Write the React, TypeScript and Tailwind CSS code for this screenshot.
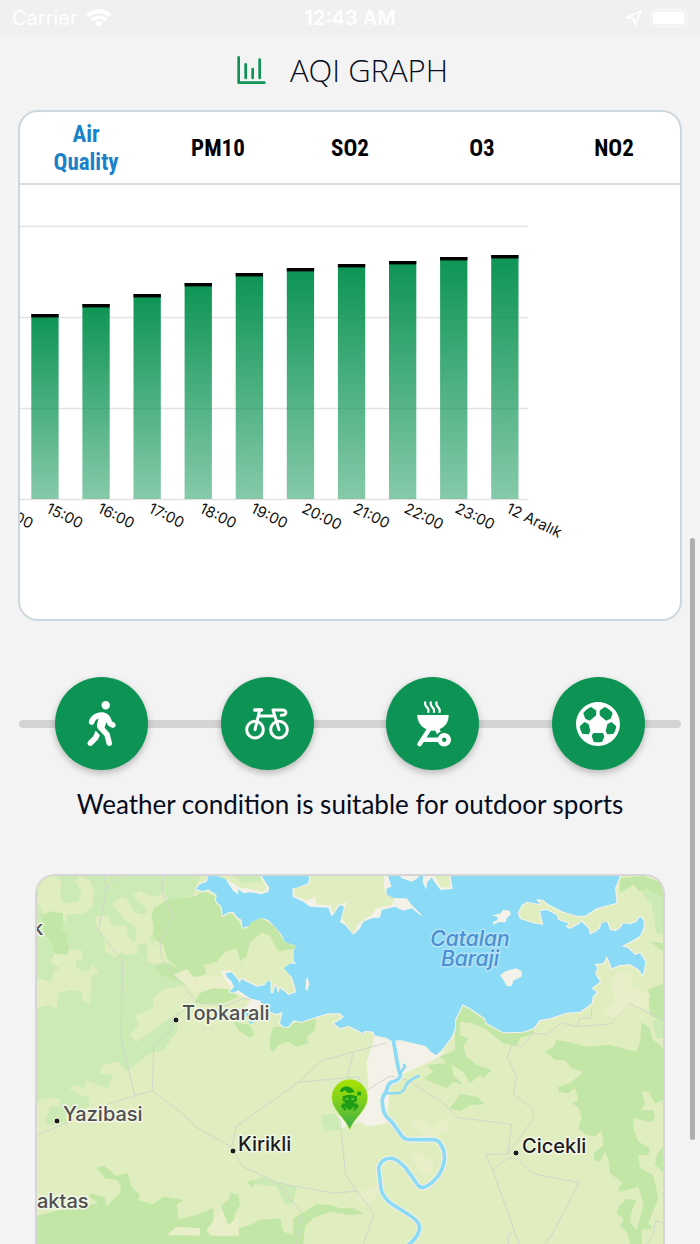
import React from "react";
import { FaPersonWalking } from "react-icons/fa6";
import { IoMdFootball } from "react-icons/io";
import { MdOutdoorGrill } from "react-icons/md";

const tabs = ["Air Quality", "PM10", "SO2", "O3", "NO2"];

const bars = [
  { label: "15:00", top: 314 },
  { label: "16:00", top: 304 },
  { label: "17:00", top: 294 },
  { label: "18:00", top: 283 },
  { label: "19:00", top: 273 },
  { label: "20:00", top: 268 },
  { label: "21:00", top: 264 },
  { label: "22:00", top: 261 },
  { label: "23:00", top: 257 },
  { label: "12 Aralık", top: 255 },
];

function StatusBar() {
  return (
    <header className="flex h-[34px] items-center bg-[#f0f0f0] px-3 pt-0.5 font-['Inter',sans-serif] text-xl leading-6 text-white">
      <div className="flex flex-1 items-center gap-2">
        <span>Carrier</span>
        <svg className="h-[18px] w-[26px]" viewBox="0 0 78 54" fill="none" aria-hidden="true">
          <path d="M5 21 A48 48 0 0 1 73 21" stroke="currentColor" strokeWidth="12" />
          <path d="M17 34 A31 31 0 0 1 61 34" stroke="currentColor" strokeWidth="11" />
          <path d="M26 42 A19 19 0 0 1 52 42 L39 54 Z" fill="currentColor" />
        </svg>
      </div>
      <time className="font-semibold">12:43 AM</time>
      <div className="flex flex-1 items-center justify-end gap-2">
        <svg className="h-4 w-4" viewBox="0 0 48 48" fill="none" aria-hidden="true">
          <path d="M45 4 L4 22 L23 26 L27 45 Z" stroke="currentColor" strokeWidth="5" strokeLinejoin="round" />
        </svg>
        <svg className="-mr-1 h-5 w-[42px]" viewBox="0 0 126 60" fill="none" aria-hidden="true">
          <rect x="3" y="4" width="108" height="52" rx="14" stroke="#f8f8f8" strokeWidth="4" />
          <rect x="9" y="11" width="94" height="38" rx="8" fill="currentColor" />
          <path d="M116 22 Q122 30 116 38 Z" fill="#f8f8f8" />
        </svg>
      </div>
    </header>
  );
}

function ChartIcon() {
  return (
    <svg className="h-[30px] w-[30px] text-[#0d9454]" viewBox="0 0 90 90" fill="none" stroke="currentColor" strokeWidth="8" strokeLinecap="round" strokeLinejoin="round" aria-hidden="true">
      <path d="M8 7 V83 H85 M29 28 V69 M50 42 V69 M71 14 V69" />
    </svg>
  );
}

function BicycleIcon() {
  return (
    <svg className="h-8 w-11" viewBox="0 0 132 96" fill="none" stroke="currentColor" strokeWidth="9" strokeLinecap="round" strokeLinejoin="round" aria-hidden="true">
      <circle cx="30" cy="65" r="25" />
      <circle cx="102" cy="65" r="25" />
      <path d="M29 6 H50" strokeWidth="10" />
      <path d="M44 6 L40 24 L30 65 M41 24 H89 M102 65 L84 6 H114 C127 8 125 23 109 22" />
    </svg>
  );
}

function AqiChart() {
  return (
    <svg className="block h-[434px] w-[660px] max-w-none" viewBox="20 185 660 434" role="img" aria-label="Air quality by hour">
      <defs>
        <linearGradient id="barFill" x1="0" y1="0" x2="0" y2="1">
          <stop offset="0" stopColor="#0d9454" />
          <stop offset="1" stopColor="#0d9454" stopOpacity="0.5" />
        </linearGradient>
      </defs>
      {[226, 317, 408, 499].map((y) => (
        <path key={y} d={`M19 ${y}.5H528`} stroke="#e3e3e3" strokeWidth="1.4" />
      ))}
      <g fontFamily="Inter, sans-serif" fontSize="15" fill="#111">
        <text transform="translate(-5 512) rotate(26)">14:00</text>
        {bars.map((bar, i) => {
          const x = 31.3 + i * 51.1;
          return (
            <g key={bar.label}>
              <rect x={x} y={bar.top} width="27.3" height={499 - bar.top} fill="url(#barFill)" />
              <rect x={x} y={bar.top} width="27.3" height="3.4" fill="#000" />
              <text transform={`translate(${x + 14} 512) rotate(26)`}>{bar.label}</text>
            </g>
          );
        })}
      </g>
    </svg>
  );
}

const lightForest = [
  "M51 33 H540 L520 90 L440 110 L400 230 L460 300 L500 360 L430 372 L400 400 V430 L345 450 L355 480 L330 510 L350 530 L420 480 L480 440 L470 500 L455 520 L430 555 L390 565 L350 595 L320 620 L295 590 L245 600 L240 625 L278 630 L265 670 L200 647 L195 670 L160 660 L150 675 L207 700 V725 L120 750 L120 700 L75 705 L51 720 Z",
  "M75 770 L90 725 L130 720 L140 770 L90 780 Z",
  "M905 750 L945 745 L960 770 L965 795 L915 797 L905 770 Z",
  "M680 955 L730 935 L770 950 L830 965 L820 1015 L795 1020 L770 965 L730 960 Z",
  "M1860 50 L1900 50 L1930 90 V210 L1910 205 L1895 120 L1870 90 Z",
  "M1895 470 L1930 450 V520 L1910 520 Z",
];

const meadows = [
  "M60 40 L100 33 L125 45 L120 80 L130 115 L175 110 L185 80 L165 50 L180 33 L210 45 L222 80 L218 125 L190 145 L140 150 L135 178 L125 145 L90 138 L75 155 L52 110 Z",
  "M275 118 L305 95 L325 105 L340 140 L375 150 L380 130 L355 110 L340 90 L360 78 L385 90 L410 95 L428 80 L445 100 L420 130 L395 150 L402 195 L388 220 L402 242 L435 250 L440 275 L465 297 L430 290 L400 300 L382 288 L380 235 L350 240 L355 265 L320 270 L300 260 L290 275 L255 262 L255 230 L230 185 L225 155 L265 150 L275 180 L320 185 L325 220 L345 235 L350 190 L320 170 Z",
  "M105 265 L142 270 L148 252 L185 255 L187 285 L170 285 L165 305 L190 320 L213 315 L215 295 L237 320 L215 335 L210 420 L188 405 L185 380 L150 375 L115 385 L110 432 L85 420 L51 430 V340 L95 350 L100 320 L120 310 L90 292 Z",
  "M51 718 L60 705 L75 700 L125 700 L105 720 L75 730 L70 760 L51 785 Z",
];

const forests = [
  "M440 105 L530 93 L547 78 L600 100 L668 187 L740 215 L745 300 L710 285 L690 215 L665 305 L650 250 L615 260 L590 290 L550 300 L560 325 L510 345 L475 310 L440 280 L430 240 L405 225 L395 150 L402 130 Z",
  "M65 150 L90 140 L130 145 L125 195 L145 215 L140 230 L147 250 L140 270 L105 265 L90 225 L75 210 Z",
  "M405 305 L430 295 L480 312 L500 335 L500 360 L450 340 L415 325 Z",
  "M525 410 L540 385 L580 368 L635 372 L655 395 L610 415 L540 418 Z",
  "M640 470 L690 480 L703 510 L690 518 L660 500 Z",
  "M750 520 L760 485 L800 485 L835 468 L860 470 L888 458 L885 495 L860 515 L865 535 L830 545 L805 530 L775 540 L760 562 L750 550 Z",
  "M51 1052 L120 1035 L235 1015 L205 992 L215 985 L255 998 L260 1022 L300 985 L303 970 L290 945 L255 940 L228 908 L252 902 L290 932 L322 923 L335 965 L360 990 L355 1005 L400 1018 L430 995 L490 1005 L470 1020 L475 1062 L530 1050 L580 1028 V1090 L600 1110 L655 1090 L690 1080 L720 1065 L780 1060 L790 1100 L820 1110 L820 1060 L890 1018 L930 1020 L960 1030 L1000 1028 L1030 1046 L990 1050 L930 1040 L880 1060 L855 1085 L850 1137 H51 Z",
  "M605 1020 L625 1005 L633 983 L655 990 L660 1020 L645 1045 L640 1070 L625 1080 L600 1050 Z",
  "M680 950 L705 945 L700 970 Z",
  "M1305 465 L1310 440 L1328 418 L1350 430 L1395 460 L1400 475 L1450 502 L1510 500 L1540 490 L1540 505 L1500 520 L1490 543 L1450 535 L1400 495 L1360 475 L1320 470 L1320 510 L1345 520 L1330 545 L1340 575 L1370 600 L1415 615 L1390 640 L1380 630 L1350 655 L1330 620 L1295 600 L1300 630 L1330 660 L1300 650 L1280 670 L1210 640 L1240 620 L1220 600 L1280 595 L1260 575 L1305 555 Z",
  "M1290 730 L1320 688 L1370 695 L1395 718 L1350 720 L1320 738 Z",
  "M1575 560 L1600 545 L1610 525 L1640 530 L1700 545 L1770 540 L1850 560 L1860 530 L1865 470 L1890 490 L1895 520 L1930 550 V705 L1905 715 L1885 680 L1865 678 L1875 715 L1865 735 L1900 735 L1905 755 L1895 772 L1840 760 V790 L1855 830 L1890 850 L1885 870 L1855 870 L1860 910 L1900 930 L1915 1000 L1885 1075 L1900 1090 L1865 1095 L1865 1137 H1830 L1820 1100 L1800 1085 L1810 1060 L1790 1045 L1800 1020 L1820 1002 L1850 1005 L1835 1040 L1830 1070 L1850 1095 L1860 1060 L1870 1020 L1855 965 L1800 980 L1795 965 L1810 955 L1770 925 L1765 885 L1755 860 L1740 890 L1725 885 L1720 865 L1750 840 L1745 795 L1725 815 L1700 810 L1675 790 L1685 760 L1675 725 L1655 715 L1675 705 L1665 668 L1645 685 L1615 680 L1615 665 L1650 655 L1690 620 L1655 610 L1635 585 L1605 585 Z",
  "M1800 40 L1870 33 L1930 55 V100 L1880 70 L1860 80 L1840 60 L1800 85 Z",
  "M1890 228 L1930 235 V260 L1915 250 Z",
  "M1885 375 L1930 355 V470 L1890 450 Z",
  "M1910 870 L1930 845 V920 L1905 900 Z",
];

const pale = [
  "M460 330 L500 312 L520 335 L560 335 L640 330 L650 375 L580 370 L530 385 Z",
  "M1170 780 L1190 760 L1240 790 L1260 770 L1290 760 L1280 800 L1220 820 Z",
  "M1165 860 L1200 865 L1240 890 L1235 930 L1200 920 Z",
  "M1005 1000 L1050 965 L1078 960 L1065 1000 L1035 1020 Z",
  "M1770 345 L1800 318 L1840 330 L1835 360 L1890 390 L1880 430 L1830 420 L1790 460 L1750 450 L1785 400 Z",
  "M440 1110 L470 1085 L540 1090 V1112 Z",
  "M560 1095 L605 1030 L625 1080 L655 1055 L657 1112 H570 Z",
];

const water =
  "M565 33 L560 50 L540 58 L527 71 L548 79 L565 73 L590 90 L588 108 L605 125 L608 152 L625 142 L640 140 L650 155 L665 165 L668 188 L690 182 L695 172 L725 158 L745 165 L765 185 L785 210 L795 232 L828 242 L820 260 L822 290 L830 296 L810 295 L790 310 L815 335 L825 365 L828 382 L805 390 L795 380 L780 370 L775 385 L766 360 L760 385 H752 L752 350 L742 345 L735 360 L710 365 L680 350 L663 342 L660 355 L650 340 L635 322 L617 325 L622 337 L635 350 L642 365 L630 380 L640 383 L655 376 L690 400 L722 408 L725 425 L750 440 L770 447 L788 440 L780 475 L790 485 H805 L820 466 L845 470 L900 452 L925 445 H960 L972 455 L960 465 L942 475 L960 490 L985 482 L1030 505 L1035 497 L1060 500 L1065 512 L1100 518 L1115 530 L1140 525 L1215 543 L1248 570 L1270 550 L1295 515 L1305 490 V465 L1328 418 L1350 430 L1395 460 L1400 475 L1450 502 L1510 500 L1540 490 L1560 465 L1590 460 L1640 443 L1680 440 L1715 415 L1718 395 L1730 382 L1715 370 L1740 350 L1725 325 L1732 310 L1723 297 L1750 295 L1760 273 L1770 295 L1775 310 L1800 300 L1830 298 L1855 312 L1868 330 L1872 315 L1876 290 L1860 265 L1845 270 L1825 250 L1805 243 L1830 230 L1860 213 L1872 185 L1870 165 L1860 155 L1850 170 L1830 178 L1810 175 L1800 190 L1788 198 L1770 195 L1762 172 L1745 170 L1740 190 L1725 202 L1710 208 L1705 190 L1685 170 L1675 178 L1650 192 L1638 185 L1645 175 L1615 165 L1610 150 L1580 135 L1560 138 L1570 180 L1540 175 L1500 162 L1493 145 L1505 120 L1520 110 L1545 115 L1560 118 L1548 102 L1570 105 L1585 118 L1630 140 L1670 152 L1695 152 L1730 130 L1790 113 L1785 70 L1800 33 Z";

const shores = [
  "M555 20 L615 40 L640 78 L655 88 L655 72 L670 85 L690 82 L725 88 L745 80 L748 68 L725 33 V20 Z",
  "M868 20 L865 55 L830 68 L817 70 L818 95 L850 110 L870 125 L925 128 L935 155 L960 120 L972 125 L960 172 L975 180 L1000 210 L1020 190 L1030 170 L1060 158 H1080 L1085 135 L1125 125 L1150 137 L1175 130 L1200 150 L1208 152 L1175 120 L1160 100 H1120 L1100 90 V70 L1115 65 L1100 20 Z",
  "M1130 20 L1145 40 L1175 50 L1195 38 V20 Z",
  "M1210 20 L1208 50 L1218 74 L1222 50 L1235 38 L1250 60 L1262 75 L1298 72 L1290 20 Z",
  "M858 345 L862 335 L868 358 L862 378 L856 372 Z",
];

const shoreMeadows = [
  "M555 20 L625 45 L660 68 L690 72 L730 82 L742 70 L720 33 V20 Z",
  "M872 20 L870 58 L820 72 L825 92 L860 108 L885 95 L890 118 L932 122 L940 145 L952 120 L980 112 L965 160 L1000 207 L1015 175 L1055 150 L1070 130 L1115 120 L1122 100 L1098 88 L1092 66 L1090 20 Z",
  "M1235 20 L1265 68 L1292 65 L1285 20 Z",
  "M1501 150 L1508 125 L1525 113 L1560 121 L1555 140 L1562 172 L1530 160 Z",
  "M1704 160 L1740 132 L1795 118 L1800 170 L1765 168 L1720 182 Z",
];

const roads =
  "M252 33 L260 70 L235 195 L308 292 L303 520 L345 692 L265 717 L51 812 M260 70 L305 35 M345 692 L397 677 L401 543 L450 500 L462 455 L530 412 L425 283 L420 230 L460 150 L427 85 V33 M530 412 L620 422 L670 400 L722 408 M397 677 L480 740 L530 787 L635 847 L650 783 L690 755 L835 652 L905 587 L1100 533 M835 652 L1015 635 L1035 680 L1110 633 L1160 645 L1265 710 L1315 758 L1475 778 L1463 868 H1397 L1418 915 L1497 1137 M1000 563 L982 635 M960 760 L977 930 M635 847 L668 905 L770 953 L845 1043 L830 1137 M770 953 L940 985 L1010 978 L977 930 M1010 978 L1062 1045 L1030 1137 M1470 555 L1462 577 L1490 635 L1480 688 L1540 733 V762 L1463 868 M1418 915 L1463 880 L1492 880 L1535 925 L1678 953 L1595 1110 L1575 1137 M1470 555 L1475 538 L1507 545 L1540 505 L1580 508 L1625 474 L1670 485 L1772 477 L1828 415 L1930 465 M1670 485 L1680 460 H1715 V433 M1465 1137 V1110 L1482 1100 M1880 1137 L1900 1110 L1907 1068 L1930 1075";

const river =
  "M1120 525 L1133 600 Q1137 622 1142 630 Q1136 648 1115 651 Q1104 656 1100 676 Q1090 692 1087 702 Q1086 738 1100 756 L1115 770 L1145 812 Q1152 824 1170 824 H1235 Q1256 824 1262 838 Q1276 858 1273 885 Q1268 918 1250 938 Q1228 964 1208 968 Q1195 966 1188 952 L1158 910 Q1130 880 1115 880 Q1100 878 1088 888 Q1075 900 1076 915 L1084 978 Q1098 1008 1120 1020 L1165 1048 Q1198 1070 1199 1085 Q1198 1115 1165 1140";

function MapLabel({ x, y, fill, halo, children }: { x: number; y: number; fill: string; halo: string; children: string }) {
  return (
    <text x={x} y={y} fill={fill} stroke={halo} strokeWidth="3" strokeLinejoin="round" paintOrder="stroke">
      {children}
    </text>
  );
}

function LocationMap() {
  return (
    <svg className="block h-auto w-full" viewBox="37 876 626 368" role="img" aria-label="Map around Kirikli">
      <defs>
        <linearGradient id="pin" x1="0" y1="0" x2="0" y2="1">
          <stop offset="0" stopColor="#a9e300" />
          <stop offset="0.5" stopColor="#77cb22" />
          <stop offset="1" stopColor="#39ae4e" />
        </linearGradient>
      </defs>
      <g transform="translate(20 865) scale(0.33333)">
        <rect x="40" y="20" width="1900" height="1130" fill="#e0eebf" />
        {lightForest.map((d) => <path key={d} d={d} fill="#cceab3" />)}
        {meadows.map((d) => <path key={d} d={d} fill="#e0eebf" />)}
        {forests.map((d) => <path key={d} d={d} fill="#c1e6a6" />)}
        {pale.map((d) => <path key={d} d={d} fill="#e8efc8" />)}
        <path d="M1065 512 L1115 525 L1215 543 L1248 570 L1280 558 L1240 585 L1155 625 L1110 660 L1100 775 L1040 785 L1020 770 L960 790 L955 755 L1000 740 L1045 670 L1040 590 Z" fill="#f4f1e8" />
        <path d="M600 318 L630 315 L660 355 L722 400 L715 435 L700 470 L670 440 L690 405 L640 380 Z" fill="#f4f1e8" />
        <path d={roads} fill="none" stroke="#cfd6cb" strokeWidth="3" />
        <path d={water} fill="#8bdbf6" stroke="#f4f1e8" strokeWidth="7" strokeLinejoin="round" paintOrder="stroke" />
        <path d="M690 478 L705 470 L690 440 L675 440 Z" fill="#8bdbf6" />
        {shores.map((d) => <path key={d} d={d} fill="#f4f1e8" />)}
        {shoreMeadows.map((d) => <path key={d} d={d} fill="#e0eebf" />)}
        <path d="M590 20 L650 38 L665 55 L725 50 L720 33 V20 Z" fill="#cceab3" />
        <path d="M660 350 L660 215 L695 172 L725 158 L765 185 L795 232 L828 242 L820 255 L775 260 L750 212 L725 203 L690 230 L680 275 L660 285 Z" fill="#c1e6a6" />
        <path d="M665 335 L662 285 L682 275 L692 232 L725 203 L748 212 L773 260 L818 252 L818 292 L790 308 L812 335 L820 365 L800 372 L778 362 L760 345 L735 352 L710 355 Z" fill="#e0eebf" />
        <path d="M1416 150 L1440 146 L1450 134 L1470 137 L1472 148 L1460 160 L1458 172 L1435 172 L1420 179 L1418 172 L1432 165 L1434 157 Z" fill="#f4f1e8" />
        <path d="M1440 331 L1458 318 L1490 310 L1506 320 L1505 335 L1480 347 L1475 364 L1460 363 L1450 345 Z" fill="#f4f1e8" />
        <path d="M1225 555 H1265 L1248 570 Z" fill="#8bdbf6" />
        <path d={river} fill="none" stroke="#f4f1e8" strokeWidth="17" strokeLinejoin="round" />
        <path d={river} fill="none" stroke="#8bdbf6" strokeWidth="11" strokeLinejoin="round" />
        <path d="M1140 625 L1155 605 L1150 597 M1095 685 L1135 684 Q1152 682 1158 660 Q1168 644 1198 632" fill="none" stroke="#8bdbf6" strokeWidth="8" />
        <path d="M989 793 C975 758 936 735 936 697 A53 53 0 0 1 1042 697 C1042 735 1003 758 989 793 Z" fill="url(#pin)" stroke="#96e31c" strokeWidth="2" />
        <g fill="#1e9e16">
          <path d="M960 680 C962 660 995 658 1004 682 L985 685 L975 676 L966 682 Z" />
          <rect x="1012" y="680" width="11" height="11" />
          <path d="M968 694 Q989 684 1011 694 V708 L1003 712 Q1004 728 989 736 Q974 728 975 712 L968 708 Z" />
          <circle cx="972" cy="722" r="7" />
          <circle cx="1007" cy="722" r="7" />
          <path d="M964 722 L978 736 M1015 722 L1001 736" stroke="#1e9e16" strokeWidth="6" />
        </g>
        <path d="M976 698 H985 V705 H976 Z M994 698 H1003 V705 H994 Z" fill="#63c31a" />
      </g>
      <g fill="#1b1b1b" stroke="#edf4dd">
        <circle cx="176" cy="1020" r="3" />
        <circle cx="57" cy="1121" r="3" />
        <circle cx="233" cy="1151" r="3" />
        <circle cx="516" cy="1153" r="3" />
      </g>
      <g fontFamily="Inter, sans-serif" fontSize="20" fontWeight="500">
        <MapLabel x={182} y={1020} fill="#505050" halo="#f3f7e8">Topkarali</MapLabel>
        <MapLabel x={63} y={1121} fill="#505050" halo="#f3f7e8">Yazibasi</MapLabel>
        <MapLabel x={37} y={1208} fill="#505050" halo="#f3f7e8">aktas</MapLabel>
        <MapLabel x={32} y={935} fill="#505050" halo="#f3f7e8">k</MapLabel>
        <MapLabel x={238} y={1151} fill="#1b1b1b" halo="#f3f7e8">Kirikli</MapLabel>
        <MapLabel x={522} y={1153} fill="#1b1b1b" halo="#f3f7e8">Cicekli</MapLabel>
      </g>
      <g fontFamily="Inter, sans-serif" fontSize="21" fontWeight="500" fontStyle="italic" textAnchor="middle">
        <MapLabel x={470} y={946} fill="#4a90d2" halo="#b4e3f6">Catalan</MapLabel>
        <MapLabel x={470} y={966} fill="#4a90d2" halo="#b4e3f6">Baraji</MapLabel>
      </g>
    </svg>
  );
}

const activities = [
  { name: "Walking", icon: <FaPersonWalking className="h-[45px] w-[45px]" /> },
  { name: "Cycling", icon: <BicycleIcon /> },
  { name: "Barbecue", icon: <MdOutdoorGrill className="h-[54px] w-[54px]" /> },
  { name: "Football", icon: <IoMdFootball className="h-[54px] w-[54px]" /> },
];

export default function App() {
  return (
    <div className="relative h-screen overflow-hidden bg-[#f3f3f3]">
      <StatusBar />
      <main>
        <div className="flex h-[76px] items-center justify-center gap-6 pr-4 pb-1">
          <ChartIcon />
          <h1 className="font-['Open_Sans',sans-serif] text-[31px] leading-10 font-light text-[#060b20]">AQI GRAPH</h1>
        </div>

        <section className="mx-[18px] overflow-hidden rounded-[20px] border-2 border-[#cdd8de] bg-white">
          <div role="tablist" className="grid h-[73px] grid-cols-5 border-b-2 border-[#d9dddf]">
            {tabs.map((tab, i) => (
              <button
                key={tab}
                type="button"
                role="tab"
                aria-selected={i === 0}
                className="px-6 pt-0.5 font-['Roboto_Condensed',sans-serif] text-[23px] leading-7 font-bold text-black aria-selected:text-[#1a82c8]"
              >
                {tab}
              </button>
            ))}
          </div>
          <AqiChart />
        </section>

        <section className="mt-14 px-[19px]">
          <div className="relative grid grid-cols-4 justify-items-center">
            <div className="absolute inset-x-0 top-1/2 h-2 -translate-y-1/2 rounded-full bg-[#d4d4d4]" />
            {activities.map((a) => (
              <button
                key={a.name}
                type="button"
                aria-label={a.name}
                className="relative flex h-[93px] w-[93px] items-center justify-center rounded-full bg-[#0d9454] text-white shadow-[0_3px_7px_rgba(0,0,0,0.25)]"
              >
                {a.icon}
              </button>
            ))}
          </div>
          <p className="mt-4 text-center font-['Lato',sans-serif] text-[26px] leading-9 text-[#060b20]">
            Weather condition is suitable for outdoor sports
          </p>
        </section>

        <section className="mx-[35px] mt-[52px] overflow-hidden rounded-t-[20px] border-2 border-b-0 border-[#d6d6d6]">
          <LocationMap />
        </section>
      </main>
      <div className="absolute top-[538px] right-[5px] h-[602px] w-[5px] rounded-full bg-[#aeaeae]" />
    </div>
  );
}
